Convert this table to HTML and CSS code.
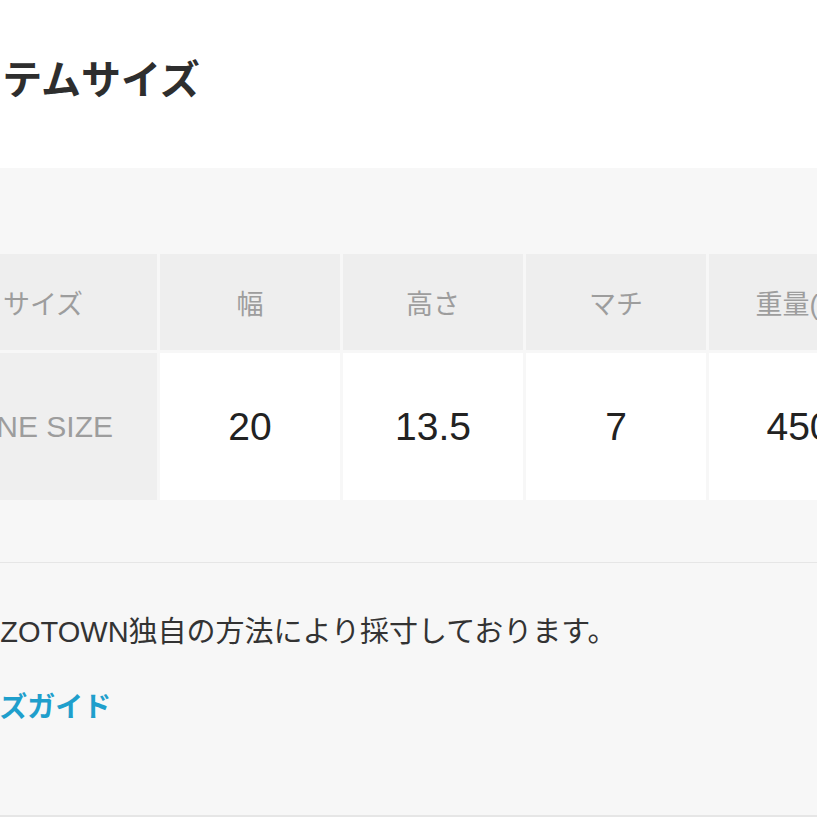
FILE: index.html
```html
<!DOCTYPE html>
<html lang="ja">
<head>
  <meta charset="UTF-8">
  <meta name="viewport" content="width=device-width, initial-scale=1.0">
  <title>アイテムサイズ</title>
  <link rel="stylesheet" href="styles.css">
</head>
<body>
  <div class="page">
    <!-- 見出し -->
    <h2 class="section-title">アイテムサイズ</h2>

    <!-- サイズ表エリア -->
    <div class="size-panel">
      <table class="size-table">
        <thead>
          <tr>
            <th class="col-label">サイズ</th>
            <th>幅</th>
            <th>高さ</th>
            <th>マチ</th>
            <th>重量(g)</th>
          </tr>
        </thead>
        <tbody>
          <tr>
            <th class="col-label">ONE SIZE</th>
            <td>20</td>
            <td>13.5</td>
            <td>7</td>
            <td>450</td>
          </tr>
        </tbody>
      </table>

      <hr class="divider">

      <p class="size-note">ZOZOTOWN独自の方法により採寸しております。</p>
      <a class="size-guide" href="#">サイズガイド</a>
    </div>
  </div>
</body>
</html>
```

FILE: styles.css
```css
html, body {
  margin: 0;
  padding: 0;
  background: #fff;
  overflow: hidden;
}
body {
  font-family: "Liberation Sans", "Noto Sans CJK JP", sans-serif;
  color: #333;
}
/* 画面の左端が切れているので全体を左へずらす */
.page {
  margin-left: -74px;
  width: 1000px;
}
/* 見出し */
.section-title {
  margin: 56px 0 64px -1px;
  font-size: 40px;
  line-height: 48px;
  font-weight: 700;
  color: #2e2e2e;
}
/* グレーのパネル */
.size-panel {
  background: #f7f7f7;
  padding: 83px 0 87px;
  border-bottom: 2px solid #e6e6e6;
}
/* サイズ表 */
.size-table {
  border-collapse: separate;
  border-spacing: 3px;
}
.size-table th,
.size-table td {
  width: 180px;
  padding: 0;
  text-align: center;
  vertical-align: middle;
}
.size-table thead th {
  height: 96px;
  background: #eee;
  color: #9d9d9d;
  font-size: 27px;
  font-weight: 400;
}
.size-table tbody th,
.size-table tbody td {
  height: 147px;
}
.size-table .col-label {
  width: 228px;
}
.size-table tbody th {
  background: #efefef;
  color: #9d9d9d;
  font-size: 30px;
  font-weight: 400;
}
.size-table tbody td {
  background: #fff;
  color: #222;
  font-size: 39px;
}
/* 区切り線 */
.divider {
  margin: 59px 0 0;
  border: 0;
  border-top: 1px solid #e6e6e6;
}
/* 注記 */
.size-note {
  margin: 49px 0 0 34px;
  font-size: 29px;
  line-height: 40px;
  color: #333;
}
.size-guide {
  display: block;
  margin: 36px 0 0 18px;
  font-size: 28px;
  line-height: 40px;
  font-weight: 700;
  color: #1f9fcc;
  text-decoration: none;
}
```
